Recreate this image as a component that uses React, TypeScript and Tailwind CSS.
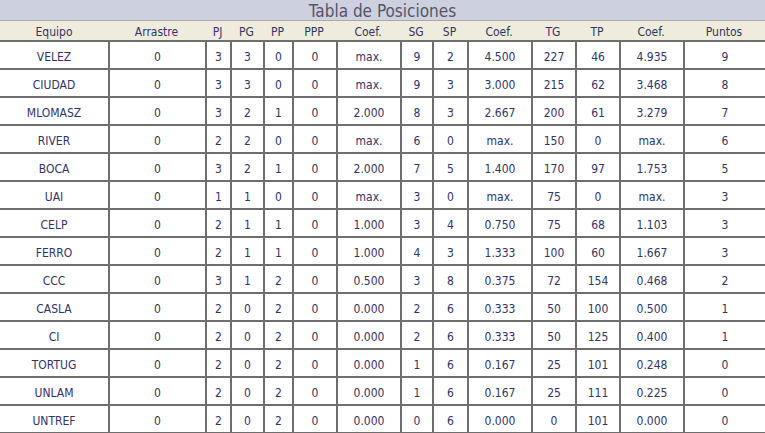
import React from "react";

const cols = "grid grid-cols-[108px_97px_25px_33px_29px_44px_64px_32px_35px_64px_44px_44px_64px_82px]";

const headers = ["Equipo", "Arrastre", "PJ", "PG", "PP", "PPP", "Coef.", "SG", "SP", "Coef.", "TG", "TP", "Coef.", "Puntos"];

const rows: string[][] = [
  ["VELEZ", "0", "3", "3", "0", "0", "max.", "9", "2", "4.500", "227", "46", "4.935", "9"],
  ["CIUDAD", "0", "3", "3", "0", "0", "max.", "9", "3", "3.000", "215", "62", "3.468", "8"],
  ["MLOMASZ", "0", "3", "2", "1", "0", "2.000", "8", "3", "2.667", "200", "61", "3.279", "7"],
  ["RIVER", "0", "2", "2", "0", "0", "max.", "6", "0", "max.", "150", "0", "max.", "6"],
  ["BOCA", "0", "3", "2", "1", "0", "2.000", "7", "5", "1.400", "170", "97", "1.753", "5"],
  ["UAI", "0", "1", "1", "0", "0", "max.", "3", "0", "max.", "75", "0", "max.", "3"],
  ["CELP", "0", "2", "1", "1", "0", "1.000", "3", "4", "0.750", "75", "68", "1.103", "3"],
  ["FERRO", "0", "2", "1", "1", "0", "1.000", "4", "3", "1.333", "100", "60", "1.667", "3"],
  ["CCC", "0", "3", "1", "2", "0", "0.500", "3", "8", "0.375", "72", "154", "0.468", "2"],
  ["CASLA", "0", "2", "0", "2", "0", "0.000", "2", "6", "0.333", "50", "100", "0.500", "1"],
  ["CI", "0", "2", "0", "2", "0", "0.000", "2", "6", "0.333", "50", "125", "0.400", "1"],
  ["TORTUG", "0", "2", "0", "2", "0", "0.000", "1", "6", "0.167", "25", "101", "0.248", "0"],
  ["UNLAM", "0", "2", "0", "2", "0", "0.000", "1", "6", "0.167", "25", "111", "0.225", "0"],
  ["UNTREF", "0", "2", "0", "2", "0", "0.000", "0", "6", "0.000", "0", "101", "0.000", "0"],
];

export default function App() {
  return (
    <div
      className="w-[765px] h-[433px] overflow-hidden bg-white text-[#333366]"
      style={{ fontFamily: '"DejaVu Sans Condensed", "DejaVu Sans", sans-serif' }}
    >
      <div className="h-[20px] bg-[#cdd0df] pt-[1px] text-center text-[17px] leading-[20px] text-[#555566]">
        Tabla de Posiciones
      </div>
      <div className={`${cols} h-[22px] bg-[#efecdd] border-t border-[#a9a9a9] border-b-2 border-b-[#6e6e6e] text-[12px] leading-[19px]`}>
        {headers.map((h, i) => (
          <div key={i} className="pt-[2px] text-center">
            {h}
          </div>
        ))}
      </div>
      {rows.map((r, ri) => (
        <div key={ri} className={`${cols} h-[28px] border-b-2 border-[#6e6e6e] text-[12px]`}>
          {r.map((c, ci) => (
            <div
              key={ci}
              className={`flex items-center justify-center pt-[3px] ${ci > 0 ? "border-l-2 border-[#6e6e6e]" : ""}`}
            >
              {c}
            </div>
          ))}
        </div>
      ))}
    </div>
  );
}
